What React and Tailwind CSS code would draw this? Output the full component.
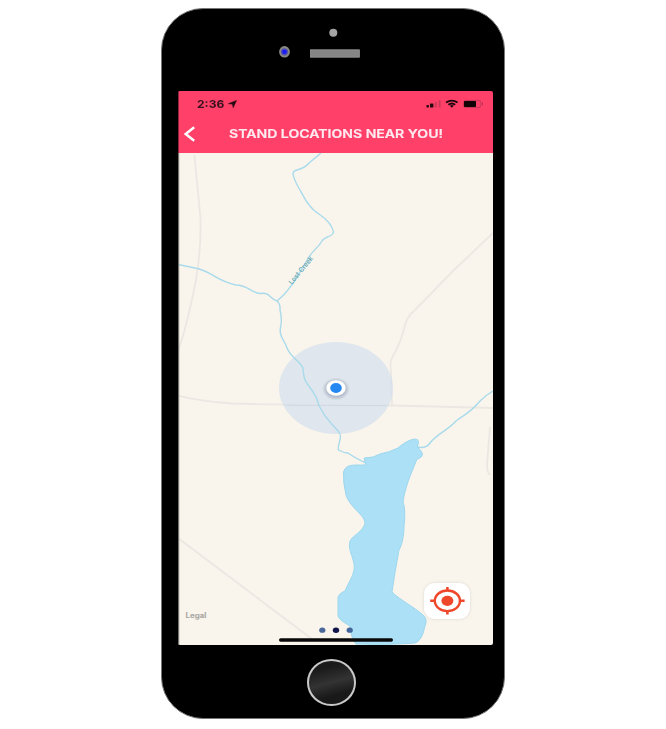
function StatusBar() {
  return (
    <div className="flex h-[26px] items-center justify-between pl-[18px] pr-[9px]">
      <div className="flex items-center">
        <span className="w-[31px] whitespace-nowrap text-[11px] leading-none font-bold text-[#35101c]">
          <span className="inline-block origin-left scale-x-[1.1]">2:36</span>
        </span>
        <svg className="h-[8px] w-[9px]" viewBox="0 0 9 8">
          <path
            d="M0.4 3.7 8.5 0.5 5.2 7.6 4.4 4.1Z"
            fill="#260a12"
            stroke="#260a12"
            strokeWidth=".6"
            strokeLinejoin="round"
          />
        </svg>
      </div>
      <svg className="h-[10px] w-[58px]" viewBox="426 99 58 10">
        <g fill="#260a12">
          <rect x="426.5" y="105" width="2.4" height="2.4" rx=".5" />
          <rect x="430" y="103.6" width="3.4" height="4" rx=".5" />
        </g>
        <g fill="#c83a58">
          <rect x="434.8" y="102" width="1.8" height="5.5" />
          <rect x="438.8" y="100.3" width="1.8" height="7.2" />
        </g>
        <g fill="none" stroke="#1b060c" strokeWidth="1.8">
          <path d="M446 102.6Q451.8 98.6 457.6 102.6" />
          <path d="M448.4 104.8Q451.8 102.2 455.2 104.8" />
        </g>
        <path d="M449.9 105.8Q451.8 104.4 453.8 105.8L451.8 107.8Z" fill="#1b060c" />
        <rect x="463.6" y="100.4" width="17.3" height="7.2" rx="2" fill="none" stroke="#bd3453" strokeWidth=".8" />
        <rect x="464" y="101" width="12" height="6" rx=".8" fill="#120307" />
        <path d="M482 102.3Q484 104 482 105.7Z" fill="#a92b48" />
      </svg>
    </div>
  );
}

function TitleBar() {
  return (
    <div className="flex h-[36px] items-start pl-[5px]">
      <svg className="mt-[9px] h-[16px] w-[12px] shrink-0" viewBox="0 0 12 16">
        <path d="M10.2 1.3 1.7 8 10.2 14.7" fill="none" stroke="#fff" strokeWidth="2.4" />
      </svg>
      <h1 className="ml-[33px] mt-[9.5px] w-[214px] whitespace-nowrap text-[12px] leading-[14px] font-semibold text-[#ffeaf0] [-webkit-text-stroke:0.2px_#ffeaf0]">
        <span className="inline-block origin-left scale-x-[1.173]">STAND LOCATIONS NEAR YOU!</span>
      </h1>
    </div>
  );
}

function MapView() {
  return (
    <svg className="block h-[492px] w-[315px]" viewBox="178 153 315 492" fontFamily="Inter, sans-serif">
      <defs>
        <radialGradient id="dotShadow">
          <stop offset=".65" stopColor="#8c98ab" stopOpacity=".55" />
          <stop offset="1" stopColor="#8c98ab" stopOpacity="0" />
        </radialGradient>
        <filter id="buttonShadow" x="-20%" y="-20%" width="140%" height="140%">
          <feDropShadow dx="0" dy="0" stdDeviation="1.5" floodColor="#aaa39a" floodOpacity=".4" />
        </filter>
      </defs>
      <rect x="178" y="153" width="315" height="492" fill="#f9f5ed" />

      <g fill="none" stroke="#ece7e2" strokeWidth="1.8">
        <path d="M194.5 155C196 178 199 197 200.5 220C200.8 240 199.5 260 196 280C191 306 187 325 178 352" />
        <path d="M493 233L453 271 415 310Q406 317 404 329 400 344 393 356 389 362 391 371L392 405" />
        <path d="M178 395.5Q198 401 232 403.5 300 405.5 393 405.5L493 408" />
        <path d="M178 538L312 639" />
        <path d="M490 427L487 465Q487 472 490 475" />
      </g>

      <ellipse cx="336" cy="388" rx="57" ry="46" fill="#d3deed" fillOpacity=".68" />
      <path d="M286 405.5H386" stroke="#d3d8e3" strokeWidth="1.2" />

      <g fill="none" stroke="#a8daeb" strokeWidth="1.4" strokeLinejoin="round">
        <path d="M321 153L309 163Q305 168 297 170 293 171 293 174 294 180 300 190C305 199 310 209 319 214Q332 223 333.5 232C333 237 325 236 322 241C318 248 314 249 309 257C299 273 291 290 277 301" />
        <path d="M178 264.5L195 268C212 271 216 281 236 285C248 285 251 293 260 293.5C271 292 268 298 277 301Q280.5 304 280 310 282 318 281 325C278 336 284 339 287 348C291 358 299 360 303 368C304 386 309 383 316 397C320 412 328 420 338 431C344 437 337 443 338.5 450Q344 453 348 453 355 458 366 463" />
        <path d="M417 447Q426 449 430 443C438 433 447 431 456 421C467 413 471 412 480 401Q486 395 493 391" />
      </g>

      <path
        d="M364 458Q374 458 380 454 390 452 398 448C406 441 414 438 417 439.5Q420 441 417 447 422 451 422.5 454 422 458 417 459C411 474 405 487 403 502Q406 510 404 526C404 536 402 545 399 550Q395 571 392 592C400 600 414 607 423 615Q428 619 425 626 422 641 415 643 391 645 356 644 351 638 350 626 339 620 338 616L338 598Q338 594 345 591C347 585 353 577 354 570C356 560 347 551 350 541C353 535 363 532 365 523C365 515 350 508 346 495Q343 483 343.5 472 345 465 355 465L366 465Z"
        fill="#ace0f6"
        stroke="#9dd7ed"
        strokeWidth="1"
        strokeLinejoin="round"
      />

      <text
        transform="translate(292 285) rotate(-51) scale(.94 1)"
        fontSize="7"
        fontWeight="600"
        fill="#6cabb8"
      >
        Lost Creek
      </text>

      <ellipse cx="336" cy="389" rx="14" ry="11.5" fill="url(#dotShadow)" />
      <ellipse cx="336" cy="388" rx="9.7" ry="7.8" fill="#fff" />
      <ellipse cx="336" cy="388" rx="5.8" ry="4.9" fill="#2388f2" />

      <rect x="424" y="583" width="46" height="36" rx="11" fill="#fff" filter="url(#buttonShadow)" />
      <g stroke="#ef472a" fill="none">
        <ellipse cx="447.4" cy="600.8" rx="12.6" ry="10.3" strokeWidth="2.4" />
        <path d="M447.4 587V591.3M447.4 610.3V614.6M430.2 600.8H436M458.8 600.8H464.6" strokeWidth="2.6" />
      </g>
      <ellipse cx="447.4" cy="600.8" rx="6" ry="5.1" fill="#ef472a" />

      <text
        transform="translate(185.6 617.5) scale(1.13 1)"
        fontSize="7"
        fontWeight="600"
        fill="#aaa8a4"
        stroke="#aaa8a4"
        strokeWidth=".2"
      >
        Legal
      </text>

      <ellipse cx="322.3" cy="630.2" rx="3.1" ry="2.6" fill="#4a6898" />
      <ellipse cx="336" cy="630.2" rx="3.2" ry="2.7" fill="#11164c" />
      <ellipse cx="349.7" cy="630.2" rx="3.1" ry="2.6" fill="#42659c" />
      <rect x="279" y="638.3" width="114" height="3.4" rx="1.7" fill="#080808" />
      <path d="M178.6 153V645" stroke="#77736e" strokeWidth="1.2" />
    </svg>
  );
}

export default function App() {
  return (
    <main className="flex h-[729px] w-[666px] items-start bg-white pl-[161px] pt-[8px] font-[Inter,sans-serif]">
      <div className="flex h-[711px] w-[344px] flex-col overflow-hidden rounded-[42px] border border-[#777] bg-black pl-[16px]">
        <div className="h-[82px] shrink-0">
          <svg className="block h-[82px] w-[315px]" viewBox="178 9 315 82">
            <circle cx="333.3" cy="32.7" r="4" fill="#a4a4a4" />
            <ellipse cx="284.5" cy="51.8" rx="5.4" ry="5.8" fill="#8b8984" />
            <circle cx="284.5" cy="51.8" r="3.6" fill="#5555a5" />
            <circle cx="284.5" cy="51.8" r="2.3" fill="#1a1aff" />
            <rect x="310.4" y="49.8" width="49" height="7.4" fill="#858585" stroke="#a0a0a0" strokeWidth=".7" />
          </svg>
        </div>
        <div className="flex h-[554px] w-[315px] shrink-0 flex-col overflow-hidden rounded-[2px]">
          <header className="h-[62px] shrink-0 border-l border-[#8e2440] bg-[#ff416a]">
            <StatusBar />
            <TitleBar />
          </header>
          <MapView />
        </div>
        <div className="flex h-[73px] shrink-0 pl-[128.5px] pt-[14px]">
          <div className="h-[47px] w-[49.5px] rounded-[50%] border-2 border-[#c8c8c8] bg-linear-165 from-[#1b1b1b] from-20% via-[#333] via-50% to-[#191919] to-75%" />
        </div>
      </div>
    </main>
  );
}
